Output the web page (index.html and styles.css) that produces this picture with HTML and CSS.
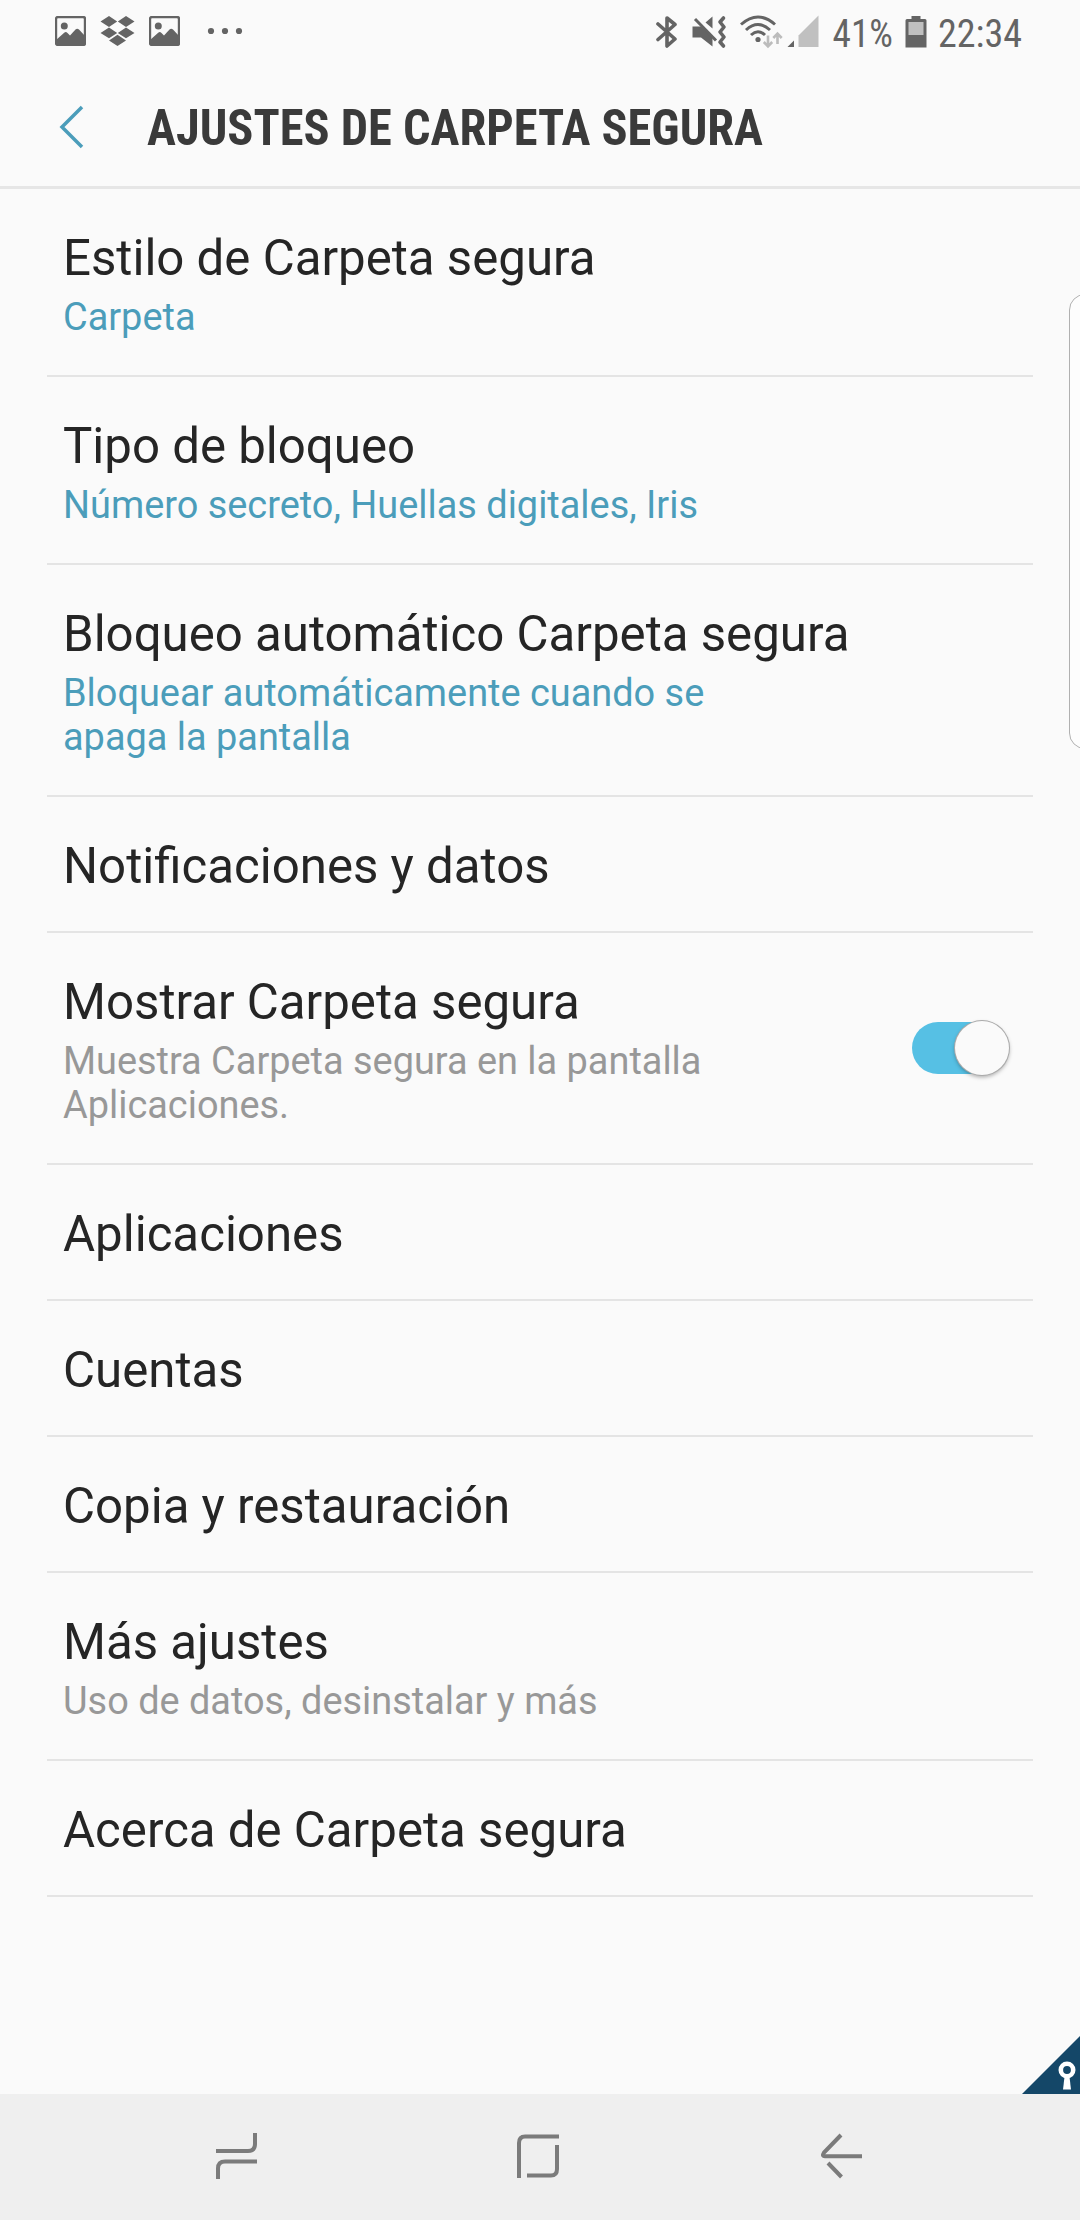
FILE: index.html
```html
<!DOCTYPE html>
<html lang="es">
    <head>
        <meta charset="UTF-8" />
        <title>Ajustes de Carpeta segura</title>
        <link rel="stylesheet" href="styles.css">
    </head>
    <body>
        <div class="screen">
            <div class="status">
                <svg class="picture" width="31" height="30" viewBox="0 0 31 30">
                    <rect x="1" y="1" width="29" height="28" rx="2" fill="none" stroke="#646464" stroke-width="2.4"/>
                    <circle cx="9.3" cy="10" r="3.5"/>
                    <path d="M1 24 L9.500 16.500 Q11 15.500 12.500 17 L15 19.500 L20.500 13.500 Q22.200 12 24 13.500 L30 20 V29 H1z"/>
                </svg>
                <svg class="dropbox" width="35" height="30" viewBox="0 0 35 30">
                    <path d="M9 0 L17.200 5.500 L9 11 L0.500 5.500z M26 0 L34.500 5.500 L26 11 L17.800 5.500z M9 11.500 L17.200 17 L9 22.300 L0.500 17z M26 11.500 L34.500 17 L26 22.300 L17.800 17z M17.500 18.800 L26 24.500 L17.500 30 L9 24.500z"/>
                </svg>
                <svg class="picture" width="31" height="30" viewBox="0 0 31 30">
                    <rect x="1" y="1" width="29" height="28" rx="2" fill="none" stroke="#646464" stroke-width="2.4"/>
                    <circle cx="9.3" cy="10" r="3.5"/>
                    <path d="M1 24 L9.500 16.500 Q11 15.500 12.500 17 L15 19.500 L20.500 13.500 Q22.200 12 24 13.500 L30 20 V29 H1z"/>
                </svg>
                <svg class="more" width="36" height="8" viewBox="0 0 36 8">
                    <circle cx="4" cy="4" r="3.1"/><circle cx="18" cy="4" r="3.1"/><circle cx="32" cy="4" r="3.1"/>
                </svg>
                <div class="status-right">
                    <svg class="bluetooth" width="22" height="34" viewBox="0 0 22 34">
                        <path d="M2 9 L19 24 L11 31 V3 L19 9.500 L2 24.500" fill="none" stroke="#646464" stroke-width="3.6" stroke-linejoin="round" stroke-linecap="round"/>
                    </svg>
                    <svg class="mute" width="36" height="34" viewBox="0 0 36 34">
                        <path d="M0.500 11.500 H9 L20.500 22 V31.500 L9 22.500 H0.500z M20.500 1.500 V13.500 L13.500 7.500z"/>
                        <path d="M3 4 L24 25.500" fill="none" stroke="#646464" stroke-width="3"/>
                        <path d="M31.500 3 L28 7 L32 12 L28 17 L32 22 L28 27 L31.500 31" fill="none" stroke="#646464" stroke-width="3.6" stroke-linejoin="round" stroke-linecap="round"/>
                    </svg>
                    <svg class="wifi" width="43" height="34" viewBox="0 0 43 34">
                        <g fill="none" stroke="#646464" stroke-width="3">
                            <path d="M1 9.500 Q18 -5.500 35 9.500"/>
                            <path d="M6 15 Q18 4 30 15"/>
                            <path d="M11 20 Q18 13.500 25 20"/>
                        </g>
                        <circle cx="18" cy="24.500" r="2.600"/>
                        <path d="M28 20.500 V31 M23.800 27 L28 31.300 L32.200 27 M37.500 29 V19 M33.300 23 L37.500 18.600 L41.700 23" fill="none" stroke="#bcbcbc" stroke-width="2.600"/>
                    </svg>
                    <svg class="signal" width="32" height="32" viewBox="0 0 32 32">
                        <path d="M0.500 32 L7 25.500 V32z"/>
                        <path d="M11.500 20.500 L31.500 0.500 V32 H11.500z" fill="#c0c0c0"/>
                    </svg>
                    <svg class="percent" width="72" height="48"><text x="4.500" y="39.500" textLength="60.500" lengthAdjust="spacingAndGlyphs">41%</text></svg>
                    <svg class="battery" width="22" height="32" viewBox="0 0 22 32">
                        <path d="M6.500 0 H15.500 V3 H20 Q21.500 3 21.500 4.500 V31.500 H0.500 V4.500 Q0.500 3 2 3 H6.500z"/>
                        <rect x="3.500" y="6" width="15" height="13" fill="#c0c0c0"/>
                    </svg>
                    <svg class="clock" width="85" height="48"><text x="0" y="39.500" textLength="84" lengthAdjust="spacingAndGlyphs">22:34</text></svg>
                </div>
            </div>

            <div class="header">
                <svg class="back" width="26" height="44" viewBox="0 0 26 44">
                    <path d="M23 2 L3 22 L23 42" fill="none" stroke="#4b9dba" stroke-width="3.500"/>
                </svg>
                <svg class="title" width="650" height="78"><text x="10" y="59" textLength="616" lengthAdjust="spacingAndGlyphs">AJUSTES DE CARPETA SEGURA</text></svg>
            </div>

            <div class="list">
                <div class="row">
                    <div class="name">Estilo de Carpeta segura</div>
                    <div class="value">Carpeta</div>
                </div>
                <div class="row">
                    <div class="name">Tipo de bloqueo</div>
                    <div class="value">Número secreto, Huellas digitales, Iris</div>
                </div>
                <div class="row">
                    <div class="name">Bloqueo automático Carpeta segura</div>
                    <div class="value">Bloquear automáticamente cuando se<br>apaga la pantalla</div>
                </div>
                <div class="row">
                    <div class="name">Notificaciones y datos</div>
                </div>
                <div class="row with-switch">
                    <div>
                        <div class="name">Mostrar Carpeta segura</div>
                        <div class="value gray">Muestra Carpeta segura en la pantalla<br>Aplicaciones.</div>
                    </div>
                    <div class="switch"><div class="thumb"></div></div>
                </div>
                <div class="row">
                    <div class="name">Aplicaciones</div>
                </div>
                <div class="row">
                    <div class="name">Cuentas</div>
                </div>
                <div class="row">
                    <div class="name">Copia y restauración</div>
                </div>
                <div class="row">
                    <div class="name">Más ajustes</div>
                    <div class="value gray">Uso de datos, desinstalar y más</div>
                </div>
                <div class="row">
                    <div class="name">Acerca de Carpeta segura</div>
                </div>
            </div>

            <div class="edge"></div>
            <svg class="corner" width="58" height="58" viewBox="0 0 58 58">
                <path d="M0 58 L58 0 V58z" fill="#144768"/>
                <circle cx="45" cy="34" r="6.200" fill="none" stroke="#fff" stroke-width="4.600"/>
                <path d="M42.500 41 H47.500 L49 53.500 H41z" fill="#fff"/>
            </svg>

            <div class="navbar">
                <svg class="recents" width="42" height="48" viewBox="0 0 42 48">
                    <path d="M0 19 H32 Q39 19 39 12 V1 M41 29.500 H9 Q2 29.500 2 36.500 V47"/>
                </svg>
                <svg class="home" width="42" height="48" viewBox="0 0 42 48">
                    <path d="M2 46 V11 Q2 4.500 8 4.500 H42 M40 13 V37 Q40 43.500 34 43.500 H10"/>
                </svg>
                <svg width="42" height="48" viewBox="0 0 42 48">
                    <path d="M20 3 L3 20.500 Q0.500 24.300 4 24.300 H41 M7 31 L20.500 45"/>
                </svg>
            </div>
        </div>
    </body>
</html>
```

FILE: styles.css
```css
body {
    margin: 0;
    background-color: #fafafa;
    font-family: Roboto, sans-serif;
}

.screen {
    position: relative;
    display: flex;
    flex-direction: column;
    width: 1080px;
    height: 2220px;
    overflow: hidden;
}

svg {
    display: block;
    flex: none;
}

/* status bar */
.status {
    display: flex;
    align-items: flex-start;
    height: 64px;
    padding: 0 57px 0 55px;
    box-sizing: border-box;
    fill: #646464;
}
.picture, .dropbox {
    margin-top: 16px;
}
.dropbox {
    margin-left: 14px;
    margin-right: 14px;
}
.more {
    margin: 27px 0 0 27px;
}
.status-right {
    display: flex;
    margin-left: auto;
}
.bluetooth {
    margin: 15px 14px 0 0;
}
.mute {
    margin: 15px 12px 0 0;
}
.wifi {
    margin: 15px 4px 0 0;
}
.signal {
    margin: 15px 9px 0 0;
}
.percent {
    margin: 7px 5px 0 0;
}
.battery {
    margin: 16px 11px 0 0;
}
.clock {
    margin-top: 7px;
}
.percent text, .clock text {
    font-family: "Roboto Condensed", Roboto, sans-serif;
    font-size: 39px;
}

/* header */
.header {
    display: flex;
    align-items: center;
    height: 122px;
    padding-left: 59px;
    border-bottom: 3px solid #e6e6e6;
}
.back {
    margin-top: 3px;
}
.title {
    margin-left: 52px;
    fill: #3a3a3a;
}
.title text {
    font-family: "Roboto Condensed", Roboto, sans-serif;
    font-size: 50px;
    font-weight: bold;
}

/* settings list */
.list {
    flex: 1;
    padding: 0 47px;
}
.row {
    border-bottom: 2px solid #e4e4e4;
    padding: 41px 16px 37px;
}
.name {
    font-size: 49.2px;
    line-height: 56px;
    color: #252525;
}
.value {
    margin-top: 9px;
    margin-bottom: -1px;
    font-size: 37.9px;
    line-height: 44px;
    color: #4b9dba;
}
.gray {
    color: #989898;
}
.with-switch {
    display: flex;
    align-items: center;
    justify-content: space-between;
    height: 152px;
}
.switch {
    display: flex;
    width: 98px;
    height: 52px;
    margin: 0 7px 4px 0;
    border-radius: 26px;
    background: linear-gradient(to right, #56c0e4 70px, transparent 70px);
}
.thumb {
    width: 54px;
    height: 54px;
    margin: -1px 0 0 43px;
    border-radius: 50%;
    background-color: #fafafa;
    box-shadow: 0 0 0 1px #aaa, 0 2px 4px rgba(0, 0, 0, 0.35);
}

/* edge panel handle and secure folder mark */
.edge {
    position: absolute;
    left: 1069px;
    top: 294px;
    width: 40px;
    height: 453px;
    border: 1.5px solid #b0b0b0;
    border-radius: 16px;
    background-color: #fdfdfd;
}
.corner {
    position: absolute;
    right: 0;
    bottom: 126px;
}

/* navigation bar */
.navbar {
    display: flex;
    align-items: center;
    justify-content: space-between;
    height: 126px;
    padding: 0 217px 2px 216px;
    box-sizing: border-box;
    background-color: #efefef;
}
.home {
    margin-right: 3px;
}
.navbar path {
    fill: none;
    stroke: #7b7b7b;
    stroke-width: 4;
}
```
